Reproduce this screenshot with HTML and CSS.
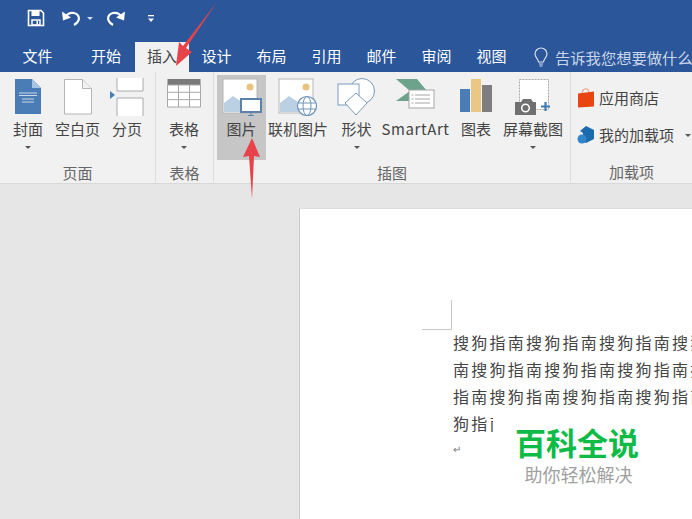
FILE: index.html
```html
<!DOCTYPE html>
<html lang="zh">
<head>
<meta charset="utf-8">
<title>Word</title>
<link rel="stylesheet" href="styles.css">
</head>
<body>
<div class="app">
  <header class="title">
    <svg class="qa save" width="18" height="18" viewBox="0 0 18 18"><path d="M1.500 1.500h12.500l2.500 2.500v12.500h-15z" fill="none" stroke="#fff" stroke-width="1.600"/><rect x="4.500" y="2" width="8" height="5" fill="#fff"/><rect x="5" y="11" width="8" height="5" fill="none" stroke="#fff" stroke-width="1.500"/><rect x="9.500" y="12" width="1.500" height="3.500" fill="#fff"/></svg>
    <svg class="qa undo" width="20" height="18" viewBox="0 0 20 18"><path d="M5 9.500 C3 5 8 3.500 12 4 C18 5.500 19 12 12 16" fill="none" stroke="#fff" stroke-width="2.200"/><path d="M0 2.500l1 9 8-3z" fill="#fff"/></svg>
    <i class="qa-caret"></i>
    <svg class="qa redo" width="20" height="18" viewBox="0 0 20 18"><path d="M15 9.500 C17 5 12 3.500 8 4 C2 5.500 1 12 8 16" fill="none" stroke="#fff" stroke-width="2.200"/><path d="M20 2.500l-1 9-8-3z" fill="#fff"/></svg>
    <svg class="qa more" width="8" height="9" viewBox="0 0 8 9"><rect x="1" y="1" width="6" height="1.300" fill="#fff"/><path d="M1 4.500h6l-3 3.500z" fill="#fff"/></svg>
  </header>
  <nav class="tabs">
    <span class="tab t1">文件</span>
    <span class="tab t2">开始</span>
    <span class="tab active">插入</span>
    <span class="tab">设计</span>
    <span class="tab">布局</span>
    <span class="tab">引用</span>
    <span class="tab">邮件</span>
    <span class="tab">审阅</span>
    <span class="tab">视图</span>
    <span class="tell">
      <svg width="16" height="20" viewBox="0 0 16 20"><path d="M5.500 15c0-3-3.500-4.500-3.500-8a6 6 0 0 1 12 0c0 3.500-3.500 5-3.500 8z" fill="none" stroke="#d5dfee" stroke-width="1.200"/><path d="M6 17h4M6.500 19h3" stroke="#d5dfee" stroke-width="1.200"/></svg>
      告诉我您想要做什么
    </span>
  </nav>
  <section class="ribbon">
    <div class="group g-page">
      <div class="items">
        <div class="item w-cover">
          <svg class="ico" width="30" height="38" viewBox="0 0 30 38"><path d="M2 1h17l9 9v26H2z" fill="#4a7db5"/><path d="M19 1l9 9h-9z" fill="#a9c4df"/><path d="M6 15h18M6 17.500h18M9 21h12M9 24h12" stroke="#c9d9ea" stroke-width="1"/></svg>
          <span>封面</span><i class="caret"></i>
        </div>
        <div class="item w-blank">
          <svg class="ico" width="30" height="38" viewBox="0 0 30 38"><path d="M1.500 1.500h18l9 9v25.500h-27z" fill="#fff" stroke="#b5b5b5"/><path d="M19.500 1.500v9h9" fill="#f1f1f1" stroke="#b5b5b5"/></svg>
          <span>空白页</span>
        </div>
        <div class="item w-break">
          <svg class="ico" width="34" height="38" viewBox="0 0 34 38"><path d="M7 0v13h26V0M7 38V20h26v18" fill="#fff" stroke="#aaa"/><path d="M0 13v8l5-4z" fill="#4a7db5"/></svg>
          <span>分页</span>
        </div>
      </div>
      <div class="label">页面</div>
    </div>
    <div class="group g-table">
      <div class="items">
        <div class="item w-table">
          <svg class="ico" width="34" height="38" viewBox="0 0 34 38"><rect x="0.500" y="1" width="33" height="6" fill="#7a7a7a"/><path d="M.5 7h33v22H.5zM.5 14.300h33M.5 21.600h33M11.500 7v22M22.500 7v22" fill="#fff" stroke="#a8a8a8"/></svg>
          <span>表格</span><i class="caret"></i>
        </div>
      </div>
      <div class="label">表格</div>
    </div>
    <div class="group g-illus">
      <div class="items">
        <div class="item w-pic selected">
          <svg class="ico" width="40" height="38" viewBox="0 0 40 38"><rect x="1" y="1" width="34" height="34" fill="#fff" stroke="#b5b5b5"/><circle cx="28" cy="9" r="3.500" fill="#e8c47f"/><path d="M2 34V25l9-7 9 6 6 10z" fill="#bcd0e4"/><rect x="19" y="21" width="20" height="13" fill="#fff" stroke="#5b82ab" stroke-width="2"/><path d="M29 34v3M26 37.500h6" stroke="#5b82ab"/></svg>
          <span>图片</span>
        </div>
        <div class="item w-online">
          <svg class="ico" width="40" height="38" viewBox="0 0 40 38"><rect x="1" y="1" width="34" height="34" fill="#fff" stroke="#b5b5b5"/><circle cx="28" cy="9" r="3.500" fill="#e8c47f"/><path d="M2 34V25l9-7 9 6 6 10z" fill="#bcd0e4"/><circle cx="29" cy="28" r="9.500" fill="#fff" stroke="#6e93b8" stroke-width="1.200"/><ellipse cx="29" cy="28" rx="4" ry="9.500" fill="none" stroke="#6e93b8"/><path d="M20 25h18M20 31h18" stroke="#6e93b8"/></svg>
          <span>联机图片</span>
        </div>
        <div class="item w-shape">
          <svg class="ico" width="40" height="38" viewBox="0 0 40 38"><circle cx="25" cy="13" r="12.500" fill="#fff" stroke="#7a9cbe"/><rect x="1" y="6" width="21" height="21" fill="#fff" stroke="#7a9cbe"/><path d="M19 15l11 10-11 12-11-12z" fill="#fff" stroke="#7a9cbe"/></svg>
          <span>形状</span><i class="caret"></i>
        </div>
        <div class="item w-smart">
          <svg class="ico" width="40" height="38" viewBox="0 0 40 38"><path d="M0 1h21l10 12H14zM14 13h17l-10 10H0z" fill="#6da38d"/><rect x="13" y="12" width="25" height="18" fill="#fff" stroke="#a5a5a5"/><path d="M19 17h15M19 21h15M19 25h15M15.500 17h2M15.500 21h2M15.500 25h2" stroke="#a5a5a5"/></svg>
          <span>SmartArt</span>
        </div>
        <div class="item w-chart">
          <svg class="ico" width="32" height="38" viewBox="0 0 32 38"><rect x="0" y="11" width="10" height="23" fill="#4a7db5"/><rect x="11" y="1" width="10" height="33" fill="#eac785"/><rect x="22" y="7" width="10" height="27" fill="#7e7e7e"/></svg>
          <span>图表</span>
        </div>
        <div class="item w-shot">
          <svg class="ico" width="36" height="38" viewBox="0 0 36 38"><rect x="4.500" y="1.500" width="29" height="30" fill="#fff" stroke="#aaa" stroke-dasharray="2 1"/><path d="M0 24h6l2-3h8l2 3h3v13H0z" fill="#707070"/><circle cx="10.500" cy="30" r="3.800" fill="#707070" stroke="#fff" stroke-width="1.500"/><path d="M26 28.500h9M30.500 24v9" stroke="#3f78b5" stroke-width="2.200"/></svg>
          <span>屏幕截图</span><i class="caret"></i>
        </div>
      </div>
      <div class="label">插图</div>
    </div>
    <div class="group g-addin">
      <div class="rows">
        <div class="row r-store">
          <svg width="18" height="22" viewBox="0 0 18 22"><path d="M5 7c0-7 7-7 7 0" fill="none" stroke="#e9a08a" stroke-width="1.200"/><path d="M1 6.500l16-2v15l-16 1z" fill="#e84510"/></svg>
          <span>应用商店</span>
        </div>
        <div class="row r-mine">
          <svg width="18" height="20" viewBox="0 0 18 20"><path d="M9 1l8 4v9l-8 4-3-2V8L3 6z" fill="#1d69ad"/><circle cx="5" cy="14" r="4.500" fill="#2f86cc"/></svg>
          <span>我的加载项</span><i class="caret side"></i>
        </div>
      </div>
      <div class="label">加载项</div>
    </div>
  </section>
  <main class="canvas">
    <article class="page">
      <div class="corner"></div>
      <div class="text">
        <p class="line">搜狗指南搜狗指南搜狗指南搜狗</p>
        <p class="line">南搜狗指南搜狗指南搜狗指南搜</p>
        <p class="line">指南搜狗指南搜狗指南搜狗指南</p>
        <p class="line">狗指南</p>
        <p class="mark">↵</p>
      </div>
    </article>
    <div class="wm">
      <div class="wm-main">百科全说</div>
      <div class="wm-sub">助你轻松解决</div>
    </div>
  </main>
  <svg class="arrows" width="692" height="519" viewBox="0 0 692 519"><path d="M217 2L186 48 192 52 176 66 179 42 183 46z" fill="#e8434a"/><path d="M252 138l8 19-6-1-2 43-3-43-6 1z" fill="#e8434a"/></svg>
</div>
</body>
</html>
```
FILE: styles.css
```css
* { box-sizing: border-box; }
html, body { margin: 0; height: 100%; }
body { font-family: "Noto Sans CJK SC", "Liberation Sans", sans-serif; overflow: hidden; color: #444; }
.app { position: relative; width: 692px; height: 519px; overflow: hidden; background: #e6e6e6; display: flex; flex-direction: column; }
.title { height: 42px; background: #2b579a; display: flex; align-items: center; padding: 0 0 6px 27px; flex: none; }
.qa { display: block; }
.undo { margin-left: 17px; }
.qa-caret { width: 0; height: 0; border: 3px solid transparent; border-top: 3px solid #d5dfee; margin: 4px 0 0 5px; }
.redo { margin-left: 12px; }
.more { margin-left: 22px; }
.tabs { height: 30px; background: #2b579a; display: flex; align-items: center; flex: none; white-space: nowrap; color: #fff; font-size: 15px; padding-left: 8px; }
.tab { height: 30px; line-height: 27px; width: 55px; text-align: center; flex: none; }
.t1 { width: 59px; }
.t2 { width: 58px; margin-left: 10px; }
.active { background: #f1f1f1; color: #444; width: 54px; }
.tell { display: flex; align-items: center; gap: 6px; padding-left: 14px; color: #c9d5e8; font-size: 15.300px; line-height: 27px; }
.ribbon { height: 112px; background: #f1f1f1; border-bottom: 1px solid #d8d8d8; display: flex; flex: none; }
.group { display: flex; flex-direction: column; height: 110px; border-right: 1px solid #dcdcdc; flex: none; }
.items { display: flex; height: 88px; padding-top: 3px; }
.item { display: flex; flex-direction: column; align-items: center; font-size: 15px; line-height: 20px; flex: none; height: 85px; white-space: nowrap; }
.ico { display: block; margin: 3px 0 3px; flex: none; height: 38px; }
.item span { display: block; }
.caret { display: block; width: 0; height: 0; border: 3px solid transparent; border-top: 3px solid #555; margin-top: 7px; }
.label { text-align: center; font-size: 15px; line-height: 20px; color: #666; margin-top: 3px; }
.g-page { width: 156px; }
.g-page .items { padding-left: 11px; }
.w-cover { width: 34px; }
.w-blank { width: 47px; margin-left: 9px; }
.w-break { width: 36px; margin-left: 8px; }
.g-table { width: 58px; }
.g-table .items { padding-left: 11px; }
.w-table { width: 34px; }
.g-illus { width: 357px; }
.g-illus .items { padding-left: 3px; }
.w-pic { width: 49px; background: #c6c6c6; }
.w-online { width: 60px; margin-left: 2px; }
.w-shape { width: 33px; margin-left: 12px; }
.w-smart { width: 67px; margin-left: 9px; letter-spacing: 0.600px; }
.w-chart { width: 32px; margin-left: 11px; }
.w-shot { width: 60px; margin-left: 11px; }
.g-addin { flex: 1; border-right: 0; }
.rows { height: 88px; padding: 15px 0 0 6px; display: flex; flex-direction: column; gap: 15px; }
.row { display: flex; align-items: center; gap: 4px; font-size: 15px; line-height: 22px; height: 22px; white-space: nowrap; }
.side { margin: 4px 0 0 7px; }
.canvas { flex: 1; position: relative; padding: 24px 0 0 299px; }
.page { position: relative; width: 393px; height: 311px; background: #fff; padding: 120px 0 0 153px; border-top: 1px solid #ddd; border-left: 1px solid #ccc; }
.corner { position: absolute; left: 122px; top: 91px; width: 30px; height: 30px; border-right: 1px solid #c8c8c8; border-bottom: 1px solid #c8c8c8; }
.text { width: 239px; overflow: hidden; }
.line { margin: 0; font-size: 16px; line-height: 27px; letter-spacing: 2.250px; white-space: nowrap; color: #444; width: 300px; }
.mark { margin: 5px 0 0; font-size: 10px; line-height: 14px; color: #777; }
.wm { position: absolute; left: 493px; top: 225px; width: 177px; height: 85px; background: #fff; text-align: center; }
.wm-main { font-size: 31px; line-height: 40px; font-weight: 700; color: #0dbb46; padding: 13px 9px 0 0; white-space: nowrap; }
.wm-sub { font-size: 18px; line-height: 22px; color: #a0a0a0; padding: 1px 6px 0 0; white-space: nowrap; }
.arrows { position: absolute; left: 0; top: 0; pointer-events: none; }
```
